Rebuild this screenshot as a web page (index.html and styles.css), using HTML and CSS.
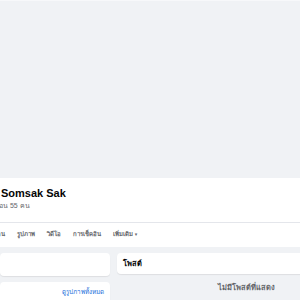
FILE: index.html
```html
<!DOCTYPE html>
<html lang="th">
<head>
    <meta charset="UTF-8">
    <title>Somsak Sak</title>
    <link rel="stylesheet" href="styles.css">
</head>
<body>
    <div class="topbar"></div>
    <div class="cover"></div>

    <header class="profile-head">
        <div class="identity">
            <h1>Somsak Sak</h1>
            <p class="friends">เพื่อน 55 คน</p>
        </div>
        <nav class="tabs">
            <a class="tab tab-cut">เพื่อน</a>
            <a class="tab">รูปภาพ</a>
            <a class="tab">วิดีโอ</a>
            <a class="tab">การเช็คอิน</a>
            <a class="tab">เพิ่มเติม <span class="caret">▾</span></a>
        </nav>
    </header>

    <main class="content">
        <aside class="left-col">
            <section class="card intro"></section>
            <section class="card photos">
                <a class="see-all">ดูรูปภาพทั้งหมด</a>
            </section>
        </aside>
        <section class="right-col">
            <div class="card posts-head">
                <h2>โพสต์</h2>
            </div>
            <p class="empty">ไม่มีโพสต์ที่แสดง</p>
        </section>
    </main>
</body>
</html>
```

FILE: styles.css
```css
html, body {
    margin: 0;
    overflow: hidden;
}

body {
    background: #f0f2f5;
    font-family: "Liberation Sans", "Noto Sans", "DejaVu Sans", sans-serif;
    color: #050505;
    width: 300px;
}

.topbar {
    height: 1px;
    background: #f7f8fa;
}

.cover {
    height: 177px;
    background: #f0f2f5;
}

.profile-head {
    background: #fff;
    height: 69px;
    display: flex;
    flex-direction: column;
}

.identity {
    padding: 8px 0 0 1px;
    height: 36px;
    border-bottom: 1px solid #e4e6eb;
}

.identity h1 {
    margin: 0;
    font-size: 11px;
    line-height: 14px;
    font-weight: bold;
}

.friends {
    margin: 1px 0 0 -9px;
    font-size: 7px;
    line-height: 9px;
    color: #65676b;
}

.tabs {
    display: flex;
    gap: 12px;
    height: 24px;
    align-items: center;
    padding-bottom: 2px;
    box-sizing: border-box;
}

.tab {
    font-size: 6px;
    color: #65676b;
    font-weight: bold;
    white-space: nowrap;
}

.tab-cut {
    margin-left: -9px;
}

.caret {
    font-size: 5px;
}

.content {
    display: flex;
    gap: 7px;
    padding-top: 6px;
}

.card {
    background: #fff;
    border-radius: 4px;
    box-shadow: 0 1px 1px rgba(0,0,0,0.08);
}

.left-col {
    width: 110px;
    flex-shrink: 0;
}

.intro {
    height: 23px;
    margin-bottom: 6px;
}

.photos {
    height: 40px;
    padding: 2px 6px 0 0;
    box-sizing: border-box;
    text-align: right;
    line-height: 9px;
}

.see-all {
    font-size: 6.3px;
    color: #216fdb;
}

.right-col {
    width: 258px;
    flex-shrink: 0;
}

.posts-head {
    height: 21px;
    display: flex;
    align-items: center;
    padding-left: 6px;
    padding-bottom: 2px;
    box-sizing: border-box;
}

.posts-head h2 {
    margin: 0;
    font-size: 7.5px;
    font-weight: bold;
}

.empty {
    margin: 9px 0 0;
    text-align: center;
    font-size: 7.5px;
    line-height: 10px;
    font-weight: bold;
    color: #65676b;
}
```
